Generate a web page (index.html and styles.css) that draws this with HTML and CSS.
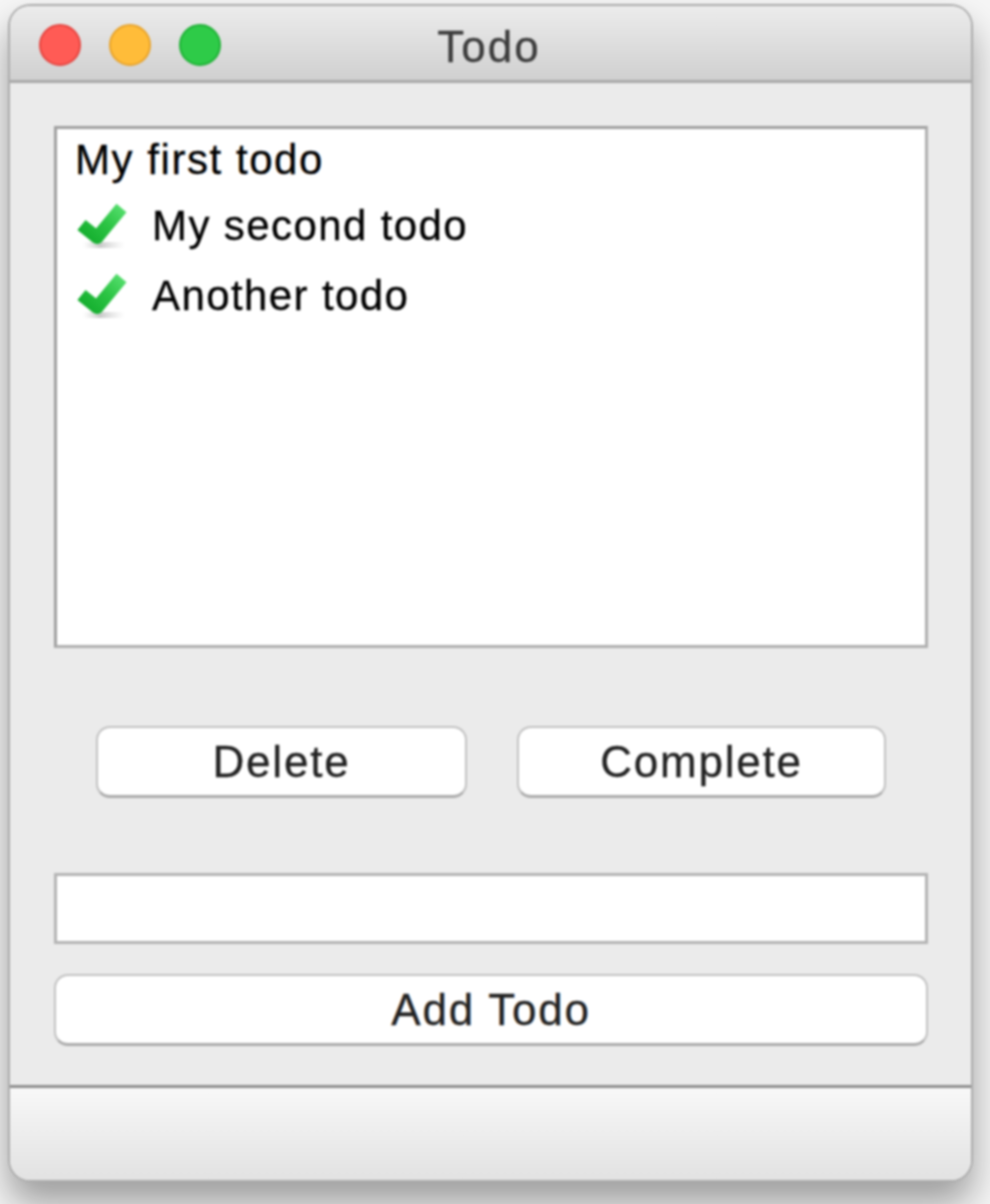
FILE: index.html
```html
<!DOCTYPE html>
<html lang="en">
<head>
<meta charset="utf-8">
<title>Todo</title>
<link rel="stylesheet" href="styles.css">
</head>
<body>
<div class="window">
  <header class="titlebar">
    <div class="lights">
      <span class="light red"></span>
      <span class="light yellow"></span>
      <span class="light green"></span>
    </div>
    <div class="title">Todo</div>
  </header>
  <main class="content">
    <ul class="list">
      <li class="item first">My first todo</li>
      <li class="item done">
        <svg class="check" viewBox="0 0 50 48" aria-hidden="true">
          <defs>
            <linearGradient id="g1" gradientUnits="userSpaceOnUse" x1="12" y1="38" x2="46" y2="2"><stop offset="0" stop-color="#14ae2e"/><stop offset=".5" stop-color="#2cc444"/><stop offset="1" stop-color="#58e070"/></linearGradient>
            <linearGradient id="s1" x1="0" y1="0" x2="1" y2="0"><stop offset="0" stop-color="#ddd" stop-opacity="0"/><stop offset=".4" stop-color="#c8c8c8"/><stop offset="1" stop-color="#ddd" stop-opacity="0"/></linearGradient>
          </defs>
          <rect x="6" y="39" width="42" height="6" fill="url(#s1)"/>
          <path d="M4.500 22 L20 34.500 L44.500 5" fill="none" stroke="url(#g1)" stroke-width="13" stroke-linejoin="round"/>
        </svg>
        <span>My second todo</span>
      </li>
      <li class="item done">
        <svg class="check" viewBox="0 0 50 48" aria-hidden="true">
          <rect x="6" y="39" width="42" height="6" fill="url(#s1)"/>
          <path d="M4.500 22 L20 34.500 L44.500 5" fill="none" stroke="url(#g1)" stroke-width="13" stroke-linejoin="round"/>
        </svg>
        <span>Another todo</span>
      </li>
    </ul>
    <div class="actions">
      <button class="btn delete">Delete</button>
      <button class="btn complete">Complete</button>
    </div>
    <input class="field" type="text" aria-label="New todo">
    <button class="btn add">Add Todo</button>
  </main>
  <footer class="statusbar"></footer>
</div>
</body>
</html>
```
FILE: styles.css
```css
* { box-sizing: border-box; }
html, body { height: 100%; }
body {
  margin: 0;
  height: 1204px;
  overflow: hidden;
  padding: 6px 19px 0 10px;
  background: #f6f6f6;
  font-family: "Liberation Sans", Arial, sans-serif;
}
.window {
  width: 961px;
  height: 1174px;
  display: flex;
  flex-direction: column;
  background: #ebebeb;
  border-radius: 20px;
  box-shadow: 0 0 0 2px #ababab, 0 22px 36px 2px rgba(0, 0, 0, .36);
  overflow: hidden;
  filter: blur(0.8px);
}
.titlebar {
  height: 77px;
  display: flex;
  align-items: center;
  position: relative;
  background: linear-gradient(#ececec, #d0d0d0);
  border-bottom: 3px solid #a9a9a9;
}
.lights { display: flex; gap: 28px; padding-left: 29px; margin-top: 4px; }
.light { width: 42px; height: 42px; border-radius: 50%; border: 2px solid; }
.red { background: #ff5b55; border-color: #e5443f; }
.yellow { background: #ffbc39; border-color: #e8a32a; }
.green { background: #2ecb48; border-color: #1fb136; }
.title {
  position: absolute;
  left: 0; right: 3px; top: 17px;
  text-align: center;
  font-size: 44px;
  line-height: 48px;
  letter-spacing: 2px;
  color: #3c3c3c;
  -webkit-text-stroke: 0.3px #3c3c3c;
}
.content {
  flex: 1;
  display: flex;
  flex-direction: column;
  padding: 43px 43px 0 44px;
}
.list {
  list-style: none;
  margin: 0;
  padding: 0 18px;
  height: 522px;
  background: #fff;
  border: 3px solid #a0a0a0;
  border-bottom-color: #b0b0b0;
  border-right-color: #b0b0b0;
}
.item {
  height: 62px;
  display: flex;
  align-items: center;
  font-size: 42px;
  letter-spacing: 1.4px;
  color: #000;
  -webkit-text-stroke: 0.3px #000;
}
.first { letter-spacing: 1.55px; }
.item.done { gap: 25px; padding-left: 2px; height: 70px; }
.check { width: 50px; height: 48px; flex: none; margin-top: 2px; }
.actions {
  display: flex;
  gap: 50px;
  padding: 78px 42px 0 42px;
}
.btn {
  height: 72px;
  padding: 0;
  font: inherit;
  font-size: 44px;
  letter-spacing: 1.8px;
  color: #222;
  -webkit-text-stroke: 0.3px #222;
  background: #fff;
  border: 2px solid #c2c2c2;
  border-bottom: 3px solid #acacac;
  border-radius: 14px;
}
.delete { width: 371px; }
.complete { width: 369px; }
.field {
  display: block;
  height: 71px;
  margin-top: 75px;
  background: #fff;
  border: 3px solid #b4b4b4;
  border-radius: 0;
  outline: none;
}
.add { margin-top: 30px; }
.statusbar {
  height: 95px;
  flex: none;
  border-top: 3px solid #8f8f8f;
  background: linear-gradient(#f8f8f8, #e2e2e2);
}
```
